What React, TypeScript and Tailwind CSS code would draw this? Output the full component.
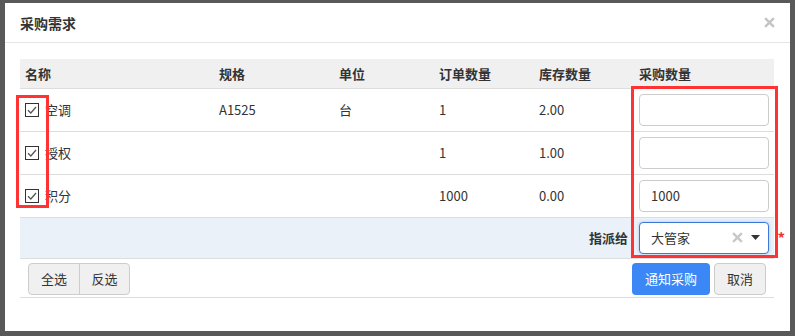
// ─── Data ────────────────────────────────────────────────

interface Row {
  name: string;
  spec: string;
  unit: string;
  ordered: string;
  stock: string;
  purchase: string;
}

const ROWS: Row[] = [
  { name: "空调", spec: "A1525", unit: "台", ordered: "1", stock: "2.00", purchase: "" },
  { name: "授权", spec: "", unit: "", ordered: "1", stock: "1.00", purchase: "" },
  { name: "积分", spec: "", unit: "", ordered: "1000", stock: "0.00", purchase: "1000" },
];

const FONT = "font-['Microsoft_YaHei','Noto_Sans_CJK_SC',sans-serif]";

// ─── Bits ────────────────────────────────────────────────

function CheckBox() {
  return (
    <svg width="14" height="14" viewBox="0 0 14 14" className="shrink-0">
      <rect x="0.5" y="0.5" width="13" height="13" fill="#fff" stroke="#333" />
      <path d="M3 7.2 L5.8 10 L11 4" fill="none" stroke="#555" strokeWidth="1.3" />
    </svg>
  );
}

function Cross({ size, color }: { size: number; color: string }) {
  return (
    <svg width={size} height={size} viewBox="0 0 10 10">
      <path d="M1 1 L9 9 M9 1 L1 9" stroke={color} strokeWidth="2.2" />
    </svg>
  );
}

function QtyInput({ value }: { value: string }) {
  return (
    <div className="flex h-[32px] w-[130px] items-center rounded-[4px] border border-[#ccc] bg-white px-[11px] text-[13px] text-[#333]">
      {value}
    </div>
  );
}

// ─── App ─────────────────────────────────────────────────

export default function App() {
  return (
    <div className={`h-[336px] w-[795px] bg-[#595959] pl-[5px] pt-[3px] ${FONT}`}>
      <div className="relative h-[328px] w-[785px] bg-white text-[13px] text-[#333]">
        {/* Header */}
        <div className="flex h-[40px] items-center justify-between border-b border-[#e5e5e5] pl-[15px] pr-[15px]">
          <span className="pt-[1px] text-[14px] font-bold">采购需求</span>
          <Cross size={11} color="#c4c4c4" />
        </div>

        {/* Body */}
        <div className="px-[15px] pt-[16px]">
          <table className="w-[754px] table-fixed border-collapse">
            <colgroup>
              <col className="w-[194px]" />
              <col className="w-[120px]" />
              <col className="w-[100px]" />
              <col className="w-[100px]" />
              <col className="w-[100px]" />
              <col className="w-[140px]" />
            </colgroup>
            <thead>
              <tr className="h-[29px] bg-[#f0f0f0] text-left font-bold">
                <th className="border-b border-[#ddd] px-[5px]">名称</th>
                <th className="border-b border-[#ddd] px-[5px]">规格</th>
                <th className="border-b border-[#ddd] px-[5px]">单位</th>
                <th className="border-b border-[#ddd] px-[5px]">订单数量</th>
                <th className="border-b border-[#ddd] px-[5px]">库存数量</th>
                <th className="border-b border-[#ddd] px-[5px]">采购数量</th>
              </tr>
            </thead>
            <tbody>
              {ROWS.map((r) => (
                <tr key={r.name} className="h-[43px]">
                  <td className="border-b border-[#ddd] px-[5px]">
                    <div className="flex items-center gap-[6px]">
                      <CheckBox />
                      <span>{r.name}</span>
                    </div>
                  </td>
                  <td className="border-b border-[#ddd] px-[5px]">{r.spec}</td>
                  <td className="border-b border-[#ddd] px-[5px]">{r.unit}</td>
                  <td className="border-b border-[#ddd] px-[5px]">{r.ordered}</td>
                  <td className="border-b border-[#ddd] px-[5px]">{r.stock}</td>
                  <td className="border-b border-[#ddd] px-[5px]">
                    <QtyInput value={r.purchase} />
                  </td>
                </tr>
              ))}
              <tr className="h-[41px] bg-[#eaf1f9]">
                <td colSpan={5} className="border-b border-[#ddd] pr-[6px] text-right font-bold">
                  指派给
                </td>
                <td className="relative border-b border-[#ddd] px-[5px]">
                  <div className="flex h-[32px] w-[130px] items-center rounded-[4px] border border-[#3c78d8] bg-white pl-[11px] pr-[8px] shadow-[0_0_3px_rgba(60,120,216,0.4)]">
                    <span className="flex-1">大管家</span>
                    <span className="mr-[8px]">
                      <Cross size={11} color="#c8c8c8" />
                    </span>
                    <svg width="9" height="5" viewBox="0 0 9 5">
                      <path d="M0 0 L9 0 L4.5 5 Z" fill="#333" />
                    </svg>
                  </div>
                  <span className="absolute right-[-11px] top-[12px] text-[15px] font-bold leading-none text-[#e33]">*</span>
                </td>
              </tr>
            </tbody>
          </table>

          {/* Actions */}
          <div className="flex h-[39px] w-[754px] items-start justify-between border-b border-[#ddd] px-[8px] pt-[4px]">
            <div className="flex">
              <button className="h-[32px] w-[52px] rounded-l-[4px] border border-[#ccc] bg-[#f0f0f0]">全选</button>
              <button className="-ml-px h-[32px] w-[51px] rounded-r-[4px] border border-[#ccc] bg-[#f0f0f0]">反选</button>
            </div>
            <div className="flex gap-[4px]">
              <button className="h-[32px] w-[78px] rounded-[4px] bg-[#3a87f5] text-white">通知采购</button>
              <button className="h-[32px] w-[52px] rounded-[4px] border border-[#ccc] bg-[#f0f0f0]">取消</button>
            </div>
          </div>
        </div>

        {/* Annotation boxes */}
        <div className="pointer-events-none absolute left-[11px] top-[92px] h-[113px] w-[33px] border-[3px] border-[#f33]" />
        <div className="pointer-events-none absolute left-[626px] top-[83px] h-[172px] w-[147px] border-[3px] border-[#f33]" />
      </div>
    </div>
  );
}
